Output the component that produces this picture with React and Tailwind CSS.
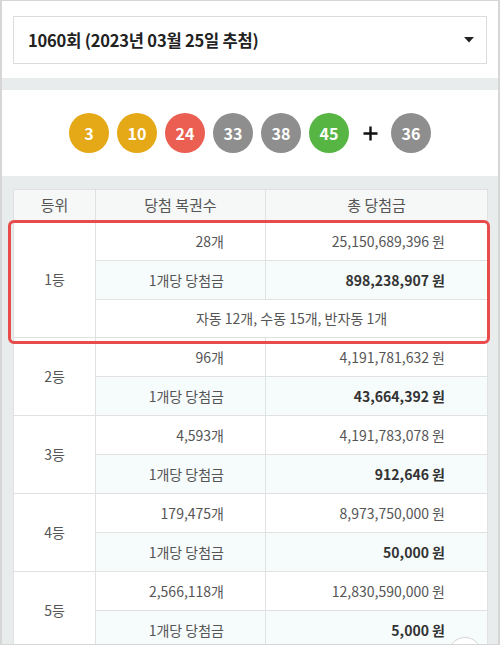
import React from "react";

const balls = [
  { n: 3, color: "bg-[#e5a816]" },
  { n: 10, color: "bg-[#e5a816]" },
  { n: 24, color: "bg-[#ea5f52]" },
  { n: 33, color: "bg-[#8e8e8e]" },
  { n: 38, color: "bg-[#8e8e8e]" },
  { n: 45, color: "bg-[#57b544]" },
];

const ranks = [
  { rank: "1등", count: "28개", total: "25,150,689,396 원", each: "898,238,907 원", extra: "자동 12개, 수동 15개, 반자동 1개" },
  { rank: "2등", count: "96개", total: "4,191,781,632 원", each: "43,664,392 원" },
  { rank: "3등", count: "4,593개", total: "4,191,783,078 원", each: "912,646 원" },
  { rank: "4등", count: "179,475개", total: "8,973,750,000 원", each: "50,000 원" },
  { rank: "5등", count: "2,566,118개", total: "12,830,590,000 원", each: "5,000 원" },
];

function Ball({ n, color }) {
  return (
    <div className={`w-[40px] h-[40px] rounded-full ${color} flex items-center justify-center text-white text-[16px] font-bold`}>
      {n}
    </div>
  );
}

export default function App() {
  return (
    <div
      className="relative w-[500px] h-[645px] overflow-hidden bg-[#e9ecec] border-x-2 border-t border-b border-[#d6d6d6]"
      style={{ fontFamily: '"Noto Sans CJK KR", "Noto Sans", sans-serif' }}
    >
      {/* draw select */}
      <div className="bg-white px-[11px] pt-[15px] pb-[14px]">
        <div className="h-[48px] border border-[#dcdcdc] flex items-center justify-between pl-[14px] pr-[12px]">
          <span className="text-[16.5px] font-bold text-[#222] tracking-[-0.2px]">1060회 (2023년 03월 25일 추첨)</span>
          <svg width="10" height="6" viewBox="0 0 10 6">
            <path d="M0 0 L10 0 L5 5.5 Z" fill="#222" />
          </svg>
        </div>
      </div>

      {/* winning numbers */}
      <div className="mt-[12px] bg-white h-[86px] flex items-center justify-center gap-[8px]">
        {balls.map((b) => (
          <Ball key={b.n} {...b} />
        ))}
        <div className="w-[26px] flex justify-center">
          <svg width="15" height="15" viewBox="0 0 15 15">
            <path d="M7.5 0.5 V14.5 M0.5 7.5 H14.5" stroke="#111" strokeWidth="2.4" />
          </svg>
        </div>
        <Ball n={36} color="bg-[#8e8e8e]" />
      </div>

      {/* prize table */}
      <div className="px-[11px] pt-[13px]">
        <div className="relative">
          <table className="w-[474px] border-collapse table-fixed bg-white text-[14px] text-[#555]">
            <colgroup>
              <col className="w-[82px]" />
              <col className="w-[170px]" />
              <col className="w-[222px]" />
            </colgroup>
            <thead>
              <tr className="h-[32px] bg-[#f6f7f7]">
                <th className="border border-[#e1e1e1] font-normal text-[15px]">등위</th>
                <th className="border border-[#e1e1e1] font-normal text-[15px]">당첨 복권수</th>
                <th className="border border-[#e1e1e1] font-normal text-[15px]">총 당첨금</th>
              </tr>
            </thead>
            <tbody>
              {ranks.map((r) => (
                <React.Fragment key={r.rank}>
                  <tr className="h-[39px]">
                    <td rowSpan={r.extra ? 3 : 2} className="border border-[#e1e1e1] text-center">
                      {r.rank}
                    </td>
                    <td className="border border-[#e1e1e1] text-right pr-[41px]">{r.count}</td>
                    <td className="border border-[#e1e1e1] text-right pr-[42px]">{r.total}</td>
                  </tr>
                  <tr className="h-[39px] bg-[#f6fbfc]">
                    <td className="border border-[#e1e1e1] text-right pr-[41px]">1개당 당첨금</td>
                    <td className="border border-[#e1e1e1] text-right pr-[42px] font-bold text-[#333]">{r.each}</td>
                  </tr>
                  {r.extra && (
                    <tr className="h-[38px]">
                      <td colSpan={2} className="border border-[#e1e1e1] text-center">
                        {r.extra}
                      </td>
                    </tr>
                  )}
                </React.Fragment>
              ))}
            </tbody>
          </table>
          {/* highlight on 1st prize */}
          <div className="absolute left-[-5px] right-[-3px] top-[31px] h-[124px] border-[3px] border-[#e84b4b] rounded-[6px] pointer-events-none" />
        </div>
      </div>

      {/* scroll-to-top button peeking */}
      <div className="absolute left-[446px] top-[636px] w-[34px] h-[34px] rounded-full bg-white border border-[#d6d6d6]" />
    </div>
  );
}
